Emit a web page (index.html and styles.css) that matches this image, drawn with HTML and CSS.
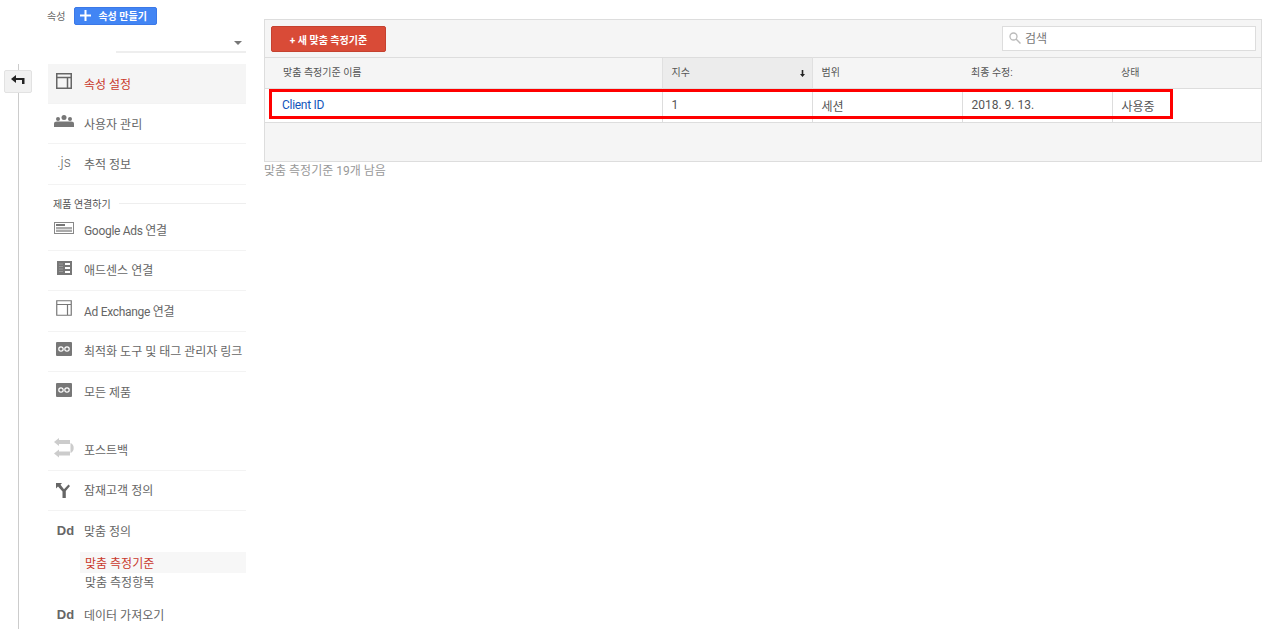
FILE: index.html
```html
<!DOCTYPE html>
<html lang="ko">
<head>
<meta charset="utf-8">
<title>맞춤 측정기준</title>
<link rel="stylesheet" href="styles.css">
</head>
<body>
<div class="page">
  <aside class="rail">
    <div class="rail-line"></div>
    <button class="back" aria-label="뒤로">
      <svg width="14" height="10" viewBox="0 0 14 10"><path d="M0 4 L5 0 V3 H13.500 V9 H11 V5 H5 V8 Z" fill="#222"/></svg>
    </button>
  </aside>
  <nav class="side">
    <div class="prop-head">
      <span class="prop-label">속성</span>
      <button class="create"><svg width="11" height="11" viewBox="0 0 11 11"><path d="M4.500 0h2v4.500H11v2H6.500V11h-2V6.500H0v-2h4.500z" fill="#fff"/></svg><span>속성 만들기</span></button>
    </div>
    <div class="prop-select"><span class="caret"></span></div>
    <ul class="menu">
      <li class="item active">
        <span class="ico"><svg width="16" height="16" viewBox="0 0 16 16"><path d="M.75.75h14.500v14.500H.75zM.75 4.500h14.500M11.500 4.500v10.700" fill="none" stroke="#666" stroke-width="1.500"/></svg></span>
        <span class="label">속성 설정</span>
      </li>
      <li class="item">
        <span class="ico"><svg width="20" height="12" viewBox="0 0 20 12"><g fill="#777"><circle cx="10" cy="2.500" r="2.500"/><circle cx="4" cy="4" r="2"/><circle cx="16" cy="4" r="2"/><path d="M0 12V8.500Q0 6.500 3 6.500H17Q20 6.500 20 8.500V12Z"/></g></svg></span>
        <span class="label">사용자 관리</span>
      </li>
      <li class="item last-sec">
        <span class="ico js">.js</span>
        <span class="label">추적 정보</span>
      </li>
    </ul>
    <div class="sec-head"><span>제품 연결하기</span><i></i></div>
    <ul class="menu">
      <li class="item">
        <span class="ico"><svg width="20" height="12" viewBox="0 0 20 12"><rect x=".5" y=".5" width="19" height="11" fill="#fff" stroke="#888"/><rect x="2" y="2" width="9" height="2" fill="#777"/><rect x="2" y="5" width="16" height="5" fill="#aaa"/><path d="M2 7.500h16" stroke="#ddd"/></svg></span>
        <span class="label latin">Google Ads 연결</span>
      </li>
      <li class="item">
        <span class="ico"><svg width="15" height="14" viewBox="0 0 15 14"><rect width="15" height="14" fill="#777"/><rect x="8" y="2" width="5" height="2" fill="#fff"/><rect x="8" y="6" width="5" height="2" fill="#fff"/><rect x="8" y="10" width="5" height="2" fill="#fff"/><path d="M2 3h4M2 5.500h4M2 8h4M2 10.500h4" stroke="#999"/></svg></span>
        <span class="label">애드센스 연결</span>
      </li>
      <li class="item">
        <span class="ico"><svg width="16" height="16" viewBox="0 0 16 16"><path d="M.75.75h14.500v14.500H.75zM.75 4.500h14.500M11.500 4.500v10.700" fill="none" stroke="#777" stroke-width="1.200"/></svg></span>
        <span class="label latin">Ad Exchange 연결</span>
      </li>
      <li class="item">
        <span class="ico"><svg width="16" height="14" viewBox="0 0 16 14"><rect width="16" height="14" rx="1" fill="#777"/><circle cx="5" cy="7" r="2.200" fill="none" stroke="#fff" stroke-width="1.200"/><circle cx="11" cy="7" r="2.200" fill="none" stroke="#fff" stroke-width="1.200"/></svg></span>
        <span class="label">최적화 도구 및 태그 관리자 링크</span>
      </li>
      <li class="item plain">
        <span class="ico"><svg width="16" height="14" viewBox="0 0 16 14"><rect width="16" height="14" rx="1" fill="#777"/><circle cx="5" cy="7" r="2.200" fill="none" stroke="#fff" stroke-width="1.200"/><circle cx="11" cy="7" r="2.200" fill="none" stroke="#fff" stroke-width="1.200"/></svg></span>
        <span class="label">모든 제품</span>
      </li>
    </ul>
    <ul class="menu tools">
      <li class="item">
        <span class="ico"><svg width="21" height="20" viewBox="0 0 21 20"><g fill="#ccc"><path d="M0 4 5 0V2H16V6H5V8Z"/><path d="M0 15.500 5 11.500V13.500H16V17.500H5V19.500Z"/><path d="M16.500 5A5.500 5.500 0 0 1 16.500 15Z"/></g></svg></span>
        <span class="label">포스트백</span>
      </li>
      <li class="item">
        <span class="ico ico-low"><svg width="16" height="15" viewBox="0 0 16 15"><path d="M0 0H6L4.500 1.800 8 6.200 12.500 1.500 14 3 9.800 8V15H6.500V8.500L2 3.500 0 5.500Z" fill="#666"/></svg></span>
        <span class="label">잠재고객 정의</span>
      </li>
      <li class="item plain">
        <span class="ico dd">Dd</span>
        <span class="label">맞춤 정의</span>
      </li>
    </ul>
    <ul class="sub">
      <li class="sub-item on">맞춤 측정기준</li>
      <li class="sub-item">맞춤 측정항목</li>
    </ul>
    <div class="item plain import">
      <span class="ico dd">Dd</span>
      <span class="label">데이터 가져오기</span>
    </div>
  </nav>
  <main class="content">
    <section class="panel">
      <div class="toolbar">
        <button class="new">+ 새 맞춤 측정기준</button>
        <label class="search">
          <svg width="12" height="12" viewBox="0 0 12 12"><circle cx="4.500" cy="4.500" r="3.500" fill="none" stroke="#bbb" stroke-width="1.300"/><path d="M7 7l4.500 4.500" stroke="#bbb" stroke-width="1.500"/></svg>
          <span>검색</span>
        </label>
      </div>
      <table class="grid">
        <colgroup><col class="c-name"><col class="c"><col class="c"><col class="c"><col class="c-last"></colgroup>
        <thead>
          <tr>
            <th class="th-name">맞춤 측정기준 이름</th>
            <th class="sorted">지수<svg class="arrow" width="5" height="7" viewBox="0 0 5 7"><path d="M1.700 0h1.600v4H5L2.500 7 0 4h1.700z" fill="#222"/></svg></th>
            <th>범위</th>
            <th>최종 수정:</th>
            <th>상태</th>
          </tr>
        </thead>
        <tbody>
          <tr>
            <td class="td-name"><a href="#">Client ID</a></td>
            <td>1</td>
            <td>세션</td>
            <td>2018. 9. 13.</td>
            <td>사용중</td>
          </tr>
        </tbody>
      </table>
      <div class="mark"></div>
    </section>
    <p class="remain">맞춤 측정기준 19개 남음</p>
  </main>
</div>
</body>
</html>
```
FILE: styles.css
```css
* { box-sizing: border-box; }
html, body { margin: 0; height: 100%; overflow: hidden; background: #fff; }
body { font-family: Roboto, "Noto Sans CJK KR", sans-serif; font-size: 12px; color: #666; }
ul { list-style: none; margin: 0; padding: 0; }
button { font-family: inherit; cursor: pointer; }

.page { display: flex; height: 629px; }

.rail { width: 48px; flex: none; position: relative; padding: 70px 0 0 4px; }
.rail-line { position: absolute; left: 18px; top: 64px; bottom: 0; width: 1px; background: #ccc; }
.back { position: relative; display: flex; align-items: center; justify-content: center; width: 28px; height: 23px; padding: 0 0 3px; background: #f1f1f1; border: 1px solid #e2e2e2; border-radius: 2px; }

.side { width: 198px; flex: none; }
.prop-head { display: flex; align-items: center; gap: 9px; height: 32px; margin-left: -1px; }
.prop-label { font-size: 10px; color: #666; margin-top: -1px; }
.create { display: flex; align-items: center; gap: 7px; width: 83px; height: 18px; margin-top: -1px; padding: 0 0 0 5px; background: #4285f4; border: 1px solid #3b78e7; border-radius: 2px; color: #fff; font-size: 10px; font-weight: 700; white-space: nowrap; }
.prop-select { position: relative; height: 21px; margin-left: 68px; border-bottom: 2px solid #eee; }
.caret { position: absolute; right: 4px; top: 9px; border: 4px solid transparent; border-top: 4px solid #777; border-bottom: 0; }

.menu { margin-top: 11px; }
.menu:nth-of-type(2) { margin-top: 0; }
.tools { margin-top: 18px; }

.item { display: flex; align-items: center; height: 40.4px; border-bottom: 1px solid #f3f3f3; padding-bottom: 1px; font-size: 12px; }
.item.plain { border-bottom: 0; }
.item.active { background: #f5f5f5; height: 40px; }
.item.active .label { color: #c9392c; }
.item.last-sec { height: 41px; }
.ico { width: 36px; flex: none; display: flex; align-items: center; justify-content: center; padding: 0 4px 0 0; margin-top: -4px; }
.ico svg { display: block; }
.ico-low { margin-top: 2px; }
.js { font-size: 14px; color: #666; font-weight: 300; }
.dd { font-family: "Liberation Sans", sans-serif; font-size: 13px; font-weight: 700; color: #666; margin-top: 0; padding-left: 3px; }
.label { white-space: nowrap; }
.label.latin { letter-spacing: -.3px; }

.sec-head { display: flex; align-items: center; gap: 8px; height: 25px; padding: 11px 0 0 5px; font-size: 10px; color: #555; }
.sec-head i { flex: 1; height: 1px; background: #eee; }

.sub { padding-left: 32px; }
.sub-item { height: 19px; line-height: 20px; padding-left: 5px; color: #666; }
.sub-item.on { background: #f7f7f7; color: #c9392c; height: 21px; line-height: 24px; }
.import { margin-top: 3px; }

.content { flex: 1; padding: 19px 18px 0 18px; min-width: 0; }
.panel { position: relative; height: 143px; background: #f5f5f5; border: 1px solid #ddd; }
.toolbar { display: flex; align-items: flex-start; justify-content: space-between; height: 37px; padding: 6px 5px 0 6px; }
.new { width: 115px; height: 26px; padding: 0; background: #d94b37; border: 1px solid #c5412f; border-radius: 2px; color: #fff; font-size: 10px; font-weight: 700; }
.search { display: flex; align-items: center; gap: 4px; width: 254px; height: 25px; padding: 0 6px 2px; background: #fff; border: 1px solid #ddd; color: #777; font-size: 12px; }

.grid { width: 996px; table-layout: fixed; border-collapse: collapse; }
.c-name { width: 397px; }
.c { width: 150px; }
.c-last { width: 149px; }
.grid th { height: 31px; padding: 0 0 3px 9px; border-top: 1px solid #ddd; text-align: left; font-size: 10px; font-weight: 400; color: #555; background: #f5f5f5; }
.grid th.th-name { padding-left: 18px; }
.grid th.sorted { position: relative; background: #ececec; border-left: 1px solid #e0e0e0; border-right: 1px solid #e0e0e0; }
.arrow { position: absolute; right: 7px; top: 12px; }
.grid td { height: 34px; padding: 0 0 1px 9px; border-top: 1px solid #ddd; border-bottom: 1px solid #ddd; border-left: 1px solid #ddd; background: #fff; font-size: 12px; color: #555; }
.grid td.td-name { border-left: 0; padding-left: 17px; }
.grid a { color: #1155bb; text-decoration: none; letter-spacing: -.3px; }
.mark { position: absolute; left: 4px; top: 69px; width: 904px; height: 30px; border: 3px solid #f00; }
.remain { margin: 2px 0 0; font-size: 12px; line-height: 14px; color: #999; }
```
